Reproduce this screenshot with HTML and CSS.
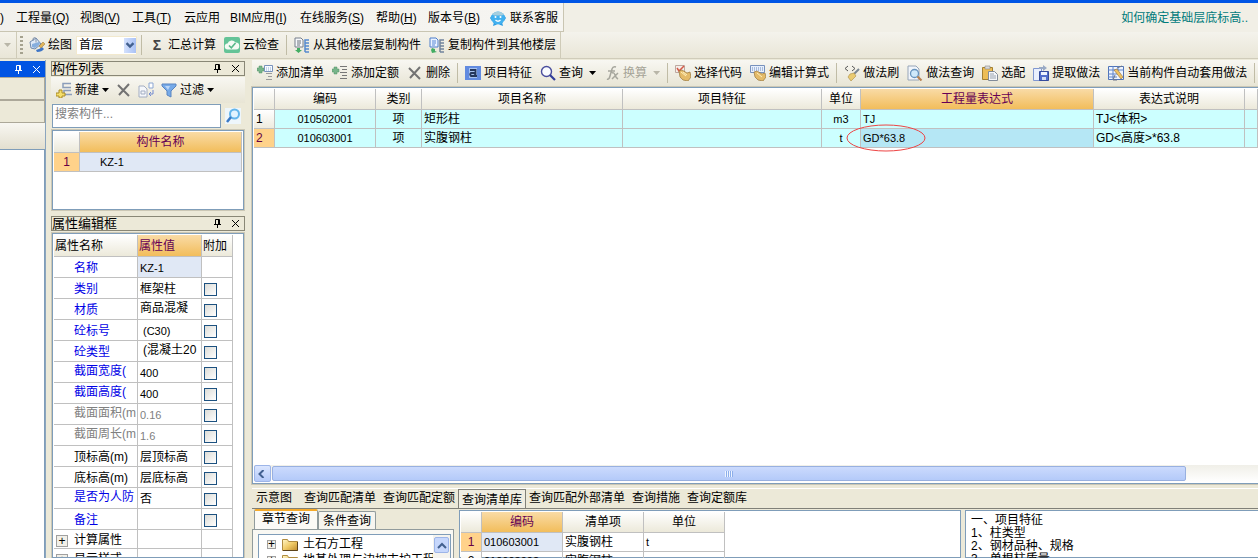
FILE: index.html
```html
<!DOCTYPE html>
<html lang="zh-CN">
<head>
<meta charset="utf-8">
<title>构件做法</title>
<link rel="stylesheet" href="styles.css">
</head>
<body>
<svg class="sprite" aria-hidden="true">
  <symbol id="i-bucket" viewBox="0 0 16 16"><path d="M1 5l6-4 5 6-6 5-4-1z" fill="#dfe9f7" stroke="#6c87ad"/><path d="M3 7l7-2 1 2-5 4-3-1z" fill="#86aede"/><path d="M4 4V1.500q2-2 3 0v4" fill="none" stroke="#8493a8"/><path d="M7 13q4-1 6-3l2 2q-2 3-7 3z" fill="#3e75c6"/><path d="M10 9l4-4 2 2-4 4z" fill="#e0b55c" stroke="#94713a" stroke-width=".5"/></symbol>
  <symbol id="i-cloud" viewBox="0 0 16 16"><rect width="16" height="16" rx="2" fill="#64c397"/><path d="M4 12.500a3 3 0 0 1-.5-6 4.500 4.500 0 0 1 8-1 3.500 3.500 0 0 1 .5 7z" fill="#f4faf4"/><path d="M5 8.500l2.300 2.300L11.500 6" fill="none" stroke="#57b889" stroke-width="1.600"/></symbol>
  <symbol id="i-from" viewBox="0 0 16 16"><path d="M1 1h6l2 2v7H1z" fill="#f7f8fa" stroke="#777f8b"/><path d="M3 4h4M3 6h4M3 8h3" stroke="#68707b"/><path d="M11 15V3h4M11 6h4M11 9h4M11 12h4M11 15h4" fill="none" stroke="#5689ce" stroke-width="1.500"/><path d="M3 11h3v2h2l-3.500 3L1 13h2z" fill="#43ad63"/></symbol>
  <symbol id="i-to" viewBox="0 0 16 16"><path d="M1 1h6l2 2v7H1z" fill="#eaf2ff" stroke="#4f7fcb"/><path d="M3 4h4M3 6h4M3 8h3" stroke="#5688d7"/><path d="M11 15V3h4M11 6h4M11 9h4M11 12h4M11 15h4" fill="none" stroke="#71849d" stroke-width="1.500"/><path d="M3 11l3 1v2l2 1-5 1-1-3z" fill="#43ad63"/></symbol>
  <symbol id="i-mascot" viewBox="0 0 16 16"><path d="M2 5L0 8l2 3M14 5l2 3-2 3M4 12l-1 4 4-1.500M12 12l1 4-4-1.500" fill="#2f9de2"/><ellipse cx="8" cy="8" rx="7" ry="6.500" fill="#43b1ef"/><path d="M2 4q6-5 12 0l-2 1.500H4z" fill="#a6cede"/><circle cx="5.500" cy="7" r="1" fill="#fff"/><circle cx="10.500" cy="7" r="1" fill="#fff"/><path d="M5.500 10q2.500 2.500 5 0" fill="none" stroke="#fff" stroke-width="1.200"/></symbol>
  <symbol id="i-pin" viewBox="0 0 9 9"><path d="M2.500 5V.5h4V5M1 5.500h7M4.500 6v3M5.500 1v4" fill="none" stroke="currentColor"/></symbol>
  <symbol id="i-close" viewBox="0 0 9 9"><path d="M1 1l7 7M8 1L1 8" stroke="currentColor"/></symbol>
  <symbol id="i-new" viewBox="0 0 16 16"><path d="M15 1.500H7v4h8M15 8.500H8v4h8" fill="none" stroke="#8b9dba" stroke-width="1.500"/><path d="M3 8h3v3h3v3H6v2H3v-2H0v-3h3z" fill="#f5df6c" stroke="#aa8c27"/></symbol>
  <symbol id="i-x" viewBox="0 0 16 16"><path d="M2 3l11 11M13 2L3 13" stroke="#737373" stroke-width="2"/></symbol>
  <symbol id="i-copy" viewBox="0 0 16 16"><path d="M1 4h5l3 3v8H1z" fill="#f5f7fb" stroke="#a2adc2"/><path d="M3 9h4v3H3z" fill="none" stroke="#a2adc2"/><path d="M11 1h4v5h-4z" fill="#fff" stroke="#8ba6d3"/><path d="M15 8v4h-3m1-2l-2 2 2 2" fill="none" stroke="#728bd1"/></symbol>
  <symbol id="i-filter" viewBox="0 0 16 16"><path d="M1 2h14v2l-5 5v6l-4-2V9L1 4z" fill="#76aae8" stroke="#5a85c0"/><path d="M4 4h5L7 8z" fill="#bcd7f7"/></symbol>
  <symbol id="i-find" viewBox="0 0 16 16"><rect width="16" height="16" fill="#eef6fb"/><circle cx="9.500" cy="6" r="4.500" fill="#e1f3ff" stroke="#62b5ec" stroke-width="2"/><path d="M6 9l-4 5" stroke="#3a79c5" stroke-width="2.500"/></symbol>
  <symbol id="i-addlist" viewBox="0 0 16 16"><path d="M2 1h3v2h2v3H5v2H2V6H0V3h2z" fill="#77b58a" stroke="#549067" stroke-width=".5"/><path d="M7.500.5h8v6h-8z" fill="#f8fbff" stroke="#7892bc"/><path d="M9 3h6M9 5h6" stroke="#8dabd7" stroke-dasharray="1 1"/><path d="M9 8.500h6M11 11.500h4M9 14.500h6" stroke="#9a9a9a"/></symbol>
  <symbol id="i-addquota" viewBox="0 0 16 16"><path d="M2 2h3v2h2v3H5v2H2V7H0V4h2z" fill="#77b58a" stroke="#549067" stroke-width=".5"/><path d="M8 1.500h7M10 4.500h5M8 7.500h7M10 10.500h5M8 13.500h7" stroke="#777"/></symbol>
  <symbol id="i-feature" viewBox="0 0 16 16"><rect y="1" width="16" height="14" fill="#628be0"/><path d="M4 3h8v10H4z" fill="#a6c2f0"/><path d="M5 5h5.500v6H12M10 8H6q-1.500 1.500 0 3h3l1-1" fill="none" stroke="#25385e" stroke-width="1.800"/></symbol>
  <symbol id="i-search" viewBox="0 0 16 16"><circle cx="6.500" cy="6.500" r="5" fill="#fafcff" stroke="#4a4e9d" stroke-width="1.400"/><path d="M10 10l5 5" stroke="#303d9a" stroke-width="2.200"/></symbol>
  <symbol id="i-fx" viewBox="0 0 16 16"><path d="M3 14q2 1 3-3l2-7q1-3 4-2M4 6h7M8 8q2-1 3 2t3 4M14 8l-6 6" fill="none" stroke="#a6a69d" stroke-width="1.500"/></symbol>
  <symbol id="i-pick" viewBox="0 0 16 16"><path d="M.5.500h9v7h-9z" fill="#f6eee9" stroke="#bda9a0"/><path d="M2 3l2 3 5-5" fill="none" stroke="#d45a48" stroke-width="1.500"/><path d="M4 6l3-1 5 3 3-1 1 5-3 4-5-1-3-3z" fill="#e4bb69" stroke="#98763a" stroke-width=".7"/><path d="M6 7l5 4M8 7l4 3" stroke="#fff0bb"/></symbol>
  <symbol id="i-expr" viewBox="0 0 16 16"><path d="M.5.500h14v7H.5z" fill="#e7effc" stroke="#7791bd"/><path d="M2 3h11M2 5h11" stroke="#6888be" stroke-dasharray="1 1"/><path d="M4 7l3-1 5 3 3-1 1 4-3 4-5-1-3-3z" fill="#e4bb69" stroke="#98763a" stroke-width=".7"/><path d="M7 8l5 4" stroke="#fff0bb"/></symbol>
  <symbol id="i-brush" viewBox="0 0 16 16"><path d="M4 1L1 3.500 4 6M8 1l3 2.500L8 6" fill="none" stroke="#555"/><path d="M15 4l-5 5" stroke="#7c8792" stroke-width="2"/><path d="M6 9l4-1 2 3-5 5-3-4z" fill="#eacb71" stroke="#ad8d43" stroke-width=".6"/></symbol>
  <symbol id="i-docfind" viewBox="0 0 16 16"><path d="M1 1h8l3 3v11H1z" fill="#f1f5fb" stroke="#97a5b8"/><circle cx="7.500" cy="8.500" r="4" fill="#cfe9fa" stroke="#6793bd" stroke-width="1.300"/><path d="M10.500 11.500l4 4" stroke="#b88352" stroke-width="2.200"/></symbol>
  <symbol id="i-paste" viewBox="0 0 16 16"><path d="M.5 2.500h10v12H.5z" fill="#edbd55" stroke="#a48031"/><path d="M3 1h5v3H3z" fill="#d9d9d9" stroke="#888" stroke-width=".6"/><path d="M6.500 6.500h6l3 3v6h-9z" fill="#f5f7fa" stroke="#818b99"/><path d="M8 9h4M8 11h6M8 13h6" stroke="#99a3af"/></symbol>
  <symbol id="i-extract" viewBox="0 0 16 16"><path d="M.5 3.500h8v12h-8z" fill="#e9effd" stroke="#8097d1"/><path d="M6 2h4V0l4 3-4 3V4H6z" fill="#9aaac5"/><path d="M6.500 6.500h9v9h-9z" fill="#526ecb" stroke="#354b9c"/><path d="M8 7h6v3H8z" fill="#eef3ff"/><path d="M9 12h4v3H9z" fill="#d4def5"/></symbol>
  <symbol id="i-auto" viewBox="0 0 16 16"><path d="M.5 1.500h15v13H.5z" fill="#eef4ff" stroke="#4f73b7"/><path d="M0 5h16M0 9h9M0 12h9M5 1v14M10 1v5" stroke="#5e83c9"/><path d="M6 5l3-1 6 8-2 2z" fill="#efc261" stroke="#99794e" stroke-width=".7"/><path d="M7 10l-2 5h4M9 3l5-2" stroke="#6e7788" fill="none"/></symbol>
  <symbol id="i-folder" viewBox="0 0 16 13"><linearGradient id="fold" x2="1" y2="1"><stop stop-color="#fff6c8"/><stop offset=".5" stop-color="#f0cb68"/><stop offset="1" stop-color="#c08b2c"/></linearGradient><path d="M.5 1.500h5l1 2h9v9H.5z" fill="url(#fold)" stroke="#b08c40"/><path d="M1 12.500h14.500V4" fill="none" stroke="#5c431c"/></symbol>
  <symbol id="i-down" viewBox="0 0 8 6"><path d="M1 1l3 3 3-3" fill="none" stroke="#42608f" stroke-width="2"/></symbol>
</svg>

<header class="top">
  <nav class="menu">
    <button>)</button>
    <button>工程量(<u>Q</u>)</button>
    <button>视图(<u>V</u>)</button>
    <button>工具(<u>T</u>)</button>
    <button>云应用</button>
    <button>BIM应用(<u>I</u>)</button>
    <button>在线服务(<u>S</u>)</button>
    <button>帮助(<u>H</u>)</button>
    <button>版本号(<u>B</u>)</button>
    <button class="service"><svg class="icon"><use href="#i-mascot"/></svg>联系客服</button>
  </nav>
  <a class="help" href="#">如何确定基础层底标高..</a>
</header>

<div class="toolbar main-tools">
  <span class="overflow"><i class="arrow dim"></i></span>
  <span class="grip"></span>
  <button class="tool"><svg class="icon"><use href="#i-bucket"/></svg>绘图</button>
  <span class="combo"><select aria-label="楼层"><option>首层</option></select><svg class="combo-arrow"><use href="#i-down"/></svg></span>
  <span class="sep"></span>
  <button class="tool"><b class="icon sigma">Σ</b>汇总计算</button>
  <button class="tool"><svg class="icon"><use href="#i-cloud"/></svg>云检查</button>
  <span class="sep"></span>
  <button class="tool"><svg class="icon"><use href="#i-from"/></svg>从其他楼层复制构件</button>
  <button class="tool"><svg class="icon"><use href="#i-to"/></svg>复制构件到其他楼层</button>
  <span class="tool-end"></span>
</div>

<main class="workspace">
  <aside class="dock">
    <div class="dock-title"><svg class="mini"><use href="#i-pin"/></svg><svg class="mini"><use href="#i-close"/></svg></div>
    <div class="dock-bar"></div>
    <div class="dock-bar"></div>
    <div class="dock-tools"></div>
    <div class="dock-body"></div>
  </aside>

  <aside class="side">
    <section class="components">
      <h2 class="title"><span>构件列表</span><svg class="mini"><use href="#i-pin"/></svg><svg class="mini"><use href="#i-close"/></svg></h2>
      <div class="toolbar list-tools">
        <button class="tool"><svg class="icon"><use href="#i-new"/></svg>新建<i class="arrow"></i></button>
        <button class="tool bare" aria-label="删除"><svg class="icon"><use href="#i-x"/></svg></button>
        <button class="tool bare" aria-label="复制"><svg class="icon"><use href="#i-copy"/></svg></button>
        <button class="tool"><svg class="icon"><use href="#i-filter"/></svg>过滤<i class="arrow"></i></button>
      </div>
      <div class="search">
        <input type="text" placeholder="搜索构件..." aria-label="搜索构件">
        <button aria-label="搜索"><svg class="icon"><use href="#i-find"/></svg></button>
      </div>
      <div class="frame list-frame">
        <table class="grid">
          <colgroup><col class="c26"><col></colgroup>
          <tr><th></th><th class="active">构件名称</th></tr>
          <tr><td class="row-no on">1</td><td class="picked indent latin">KZ-1</td></tr>
        </table>
      </div>
    </section>

    <section class="properties">
      <h2 class="title"><span>属性编辑框</span><svg class="mini"><use href="#i-pin"/></svg><svg class="mini"><use href="#i-close"/></svg></h2>
      <div class="frame prop-frame">
        <table class="grid props">
          <colgroup><col class="c84"><col class="c64"><col class="c31"></colgroup>
          <tr><th>属性名称</th><th class="active">属性值</th><th>附加</th></tr>
          <tr><td class="name">名称</td><td class="picked latin">KZ-1</td><td></td></tr>
          <tr><td class="name">类别</td><td>框架柱</td><td><input type="checkbox" aria-label="类别"></td></tr>
          <tr><td class="name">材质</td><td class="raised">商品混凝</td><td><input type="checkbox" aria-label="材质"></td></tr>
          <tr><td class="name">砼标号</td><td class="latin inset">(C30)</td><td><input type="checkbox" aria-label="砼标号"></td></tr>
          <tr><td class="name">砼类型</td><td class="raised inset">(混凝土20</td><td><input type="checkbox" aria-label="砼类型"></td></tr>
          <tr><td class="name raised">截面宽度(</td><td class="latin">400</td><td><input type="checkbox" aria-label="截面宽度"></td></tr>
          <tr><td class="name raised">截面高度(</td><td class="latin">400</td><td><input type="checkbox" aria-label="截面高度"></td></tr>
          <tr class="muted"><td class="name raised">截面面积(m</td><td class="latin">0.16</td><td><input type="checkbox" aria-label="截面面积"></td></tr>
          <tr class="muted"><td class="name raised">截面周长(m</td><td class="latin">1.6</td><td><input type="checkbox" aria-label="截面周长"></td></tr>
          <tr class="plain"><td class="name">顶标高(m)</td><td>层顶标高</td><td><input type="checkbox" aria-label="顶标高"></td></tr>
          <tr class="plain"><td class="name">底标高(m)</td><td>层底标高</td><td><input type="checkbox" aria-label="底标高"></td></tr>
          <tr><td class="name raised">是否为人防</td><td>否</td><td><input type="checkbox" aria-label="是否为人防"></td></tr>
          <tr><td class="name">备注</td><td></td><td><input type="checkbox" aria-label="备注"></td></tr>
          <tr class="group"><td><button class="expand" aria-label="展开">+</button>计算属性</td><td></td><td></td></tr>
          <tr class="group"><td><button class="expand" aria-label="展开">+</button>显示样式</td><td></td><td></td></tr>
        </table>
      </div>
    </section>
  </aside>

  <section class="content">
    <div class="toolbar work-tools">
      <button class="tool"><svg class="icon"><use href="#i-addlist"/></svg>添加清单</button>
      <button class="tool"><svg class="icon"><use href="#i-addquota"/></svg>添加定额</button>
      <button class="tool"><svg class="icon"><use href="#i-x"/></svg>删除</button>
      <span class="sep"></span>
      <button class="tool"><svg class="icon"><use href="#i-feature"/></svg>项目特征</button>
      <button class="tool"><svg class="icon"><use href="#i-search"/></svg>查询<i class="arrow far"></i></button>
      <button class="tool" disabled><svg class="icon"><use href="#i-fx"/></svg>换算<i class="arrow far dim"></i></button>
      <span class="sep"></span>
      <button class="tool"><svg class="icon"><use href="#i-pick"/></svg>选择代码</button>
      <button class="tool"><svg class="icon"><use href="#i-expr"/></svg>编辑计算式</button>
      <span class="sep"></span>
      <button class="tool"><svg class="icon"><use href="#i-brush"/></svg>做法刷</button>
      <button class="tool"><svg class="icon"><use href="#i-docfind"/></svg>做法查询</button>
      <button class="tool"><svg class="icon"><use href="#i-paste"/></svg>选配</button>
      <button class="tool"><svg class="icon"><use href="#i-extract"/></svg>提取做法</button>
      <button class="tool"><svg class="icon"><use href="#i-auto"/></svg>当前构件自动套用做法</button>
      <span class="sep"></span>
    </div>

    <div class="frame work-frame">
      <table class="grid work">
        <colgroup><col class="c21"><col class="c101"><col class="c46"><col class="c201"><col class="c199"><col class="c39"><col class="c233"><col class="c151"><col></colgroup>
        <tr><th></th><th>编码</th><th>类别</th><th>项目名称</th><th>项目特征</th><th>单位</th><th class="active">工程量表达式</th><th>表达式说明</th><th></th></tr>
        <tr><td class="row-no">1</td><td class="center latin">010502001</td><td class="center">项</td><td>矩形柱</td><td></td><td class="center latin">m3</td><td class="latin">TJ</td><td>TJ&lt;体积&gt;</td><td></td></tr>
        <tr><td class="row-no on">2</td><td class="center latin">010603001</td><td class="center">项</td><td>实腹钢柱</td><td></td><td class="center latin">t</td><td class="latin current">GD*63.8<svg class="mark" viewBox="0 0 80 28"><ellipse cx="40" cy="14" rx="39" ry="13" fill="none" stroke="#ee4444"/></svg></td><td>GD&lt;高度&gt;*63.8</td><td></td></tr>
      </table>
      <div class="hscroll">
        <button aria-label="向左滚动"><svg viewBox="0 0 8 8"><path d="M5.500 0l-4 4 4 4" fill="none" stroke="#42608f" stroke-width="2"/></svg></button>
        <div class="thumb"><i></i></div>
      </div>
    </div>

    <nav class="tabs">
      <button class="first">示意图</button><button>查询匹配清单</button><button>查询匹配定额</button><button class="selected">查询清单库</button><button>查询匹配外部清单</button><button>查询措施</button><button>查询定额库</button>
    </nav>

    <div class="lower">
      <section class="chapters">
        <div class="subtabs"><button class="selected">章节查询</button><button>条件查询</button></div>
        <div class="tree-page">
          <div class="tree">
            <ul>
              <li><button class="expand" aria-label="展开">+</button><svg class="folder"><use href="#i-folder"/></svg>土石方工程</li>
              <li><button class="expand" aria-label="展开">+</button><svg class="folder"><use href="#i-folder"/></svg>地基处理与边坡支护工程</li>
            </ul>
            <div class="vscroll"><button aria-label="向上滚动"><svg viewBox="0 0 10 7"><path d="M1 6l4-4 4 4" fill="none" stroke="#42608f" stroke-width="2"/></svg></button></div>
          </div>
        </div>
      </section>
      <section class="results">
        <table class="grid">
          <colgroup><col class="c21"><col class="c81"><col class="c81"><col class="c81"></colgroup>
          <tr><th></th><th class="active">编码</th><th>清单项</th><th>单位</th></tr>
          <tr><td class="row-no on">1</td><td class="picked latin">010603001</td><td>实腹钢柱</td><td class="latin">t</td></tr>
          <tr><td class="row-no">2</td><td class="latin">010603002</td><td>实腹钢柱</td><td class="latin"></td></tr>
        </table>
      </section>
      <section class="notes">
        <p>一、项目特征</p><p>1、柱类型</p><p>2、钢材品种、规格</p><p>3、单根柱质量</p>
      </section>
    </div>
  </section>
</main>
</body>
</html>
```

FILE: styles.css
```css
* { box-sizing: border-box; }
body {
  margin: 0;
  height: 100vh;
  overflow: hidden;
  display: flex;
  flex-direction: column;
  border-top: 3px solid #0055e5;
  background: #ece9d8;
  color: #000;
  font: 12px/16px "Liberation Sans", "Noto Sans CJK SC", sans-serif;
}
button, input, select { font: inherit; color: inherit; margin: 0; border-radius: 0; }
button { border: 0; padding: 0; background: none; white-space: nowrap; }
.sprite { position: absolute; width: 0; height: 0; }
.icon { width: 16px; height: 16px; flex: none; }
.mini { width: 9px; height: 9px; flex: none; }

/* menu */
.top { flex: none; height: 29px; display: flex; justify-content: space-between; align-items: stretch; background: #f1efe6; }
.menu {
  display: grid;
  grid-template-columns: 16px 64px 52px 52px 46px 70px 76px 52px 62px 73px;
  padding-top: 2px;
  background: linear-gradient(90deg, #f1f0ec, #f6f5f1);
  border-right: 1px solid #c9c5b2;
  border-bottom: 1px solid #c9c5b2;
}
.menu button { text-align: left; }
.menu u { text-underline-offset: 1px; }
.menu .service { display: flex; align-items: center; gap: 4px; }
.help { align-self: center; padding-right: 10px; color: #007b7b; text-decoration: none; }

/* toolbars */
.toolbar { flex: none; display: flex; align-items: center; height: 26px; background: linear-gradient(#f8f7f2, #e8e5d5); overflow: hidden; }
.tool { display: flex; align-items: center; gap: 3px; padding: 0 4px; height: 22px; flex: none; }
.tool:disabled { color: #a6a497; }
.sep { flex: none; width: 1px; height: 20px; margin: 0 3px; background: #c0bca6; }
.arrow { flex: none; width: 7px; height: 4px; background: #000; clip-path: polygon(0 0, 100% 0, 50% 100%); }
.arrow.far { margin-left: 3px; }
.arrow.dim { background: #b9b6a8; }
.main-tools { height: 27px; border-bottom: 1px solid #d0ccba; background: linear-gradient(#f4f3ec, #e9e6d7); }
.overflow { width: 17px; padding-left: 4px; height: 26px; display: flex; align-items: center; border-right: 1px solid #cfcbb8; }
.grip { width: 3px; height: 18px; margin: 0 2px 0 3px; background: repeating-linear-gradient(#a5a28f 0 2px, transparent 2px 4px); }
.sigma { font: 700 14px/16px "Liberation Sans", sans-serif; text-align: center; color: #444; }
.combo { position: relative; width: 61px; height: 19px; margin-right: 1px; }
.combo select { appearance: none; width: 100%; height: 19px; padding: 0 2px; border: 1px solid #f2e9ce; background: #fff; line-height: 16px; }
.combo-arrow { position: absolute; right: 1px; top: 2px; width: 12px; height: 15px; padding: 4px 1px; background: linear-gradient(90deg, #d4e1fd, #a9c1f5); pointer-events: none; }
.tool-end { width: 1px; height: 26px; background: #cfcbb8; }

/* docks */
.workspace { flex: 1; min-height: 0; display: flex; padding-top: 1px; }
.dock { width: 46px; flex: none; padding-top: 1px; display: flex; flex-direction: column; border-right: 1px solid #8ba5be; }
.dock-title { height: 16px; padding: 0 4px; gap: 9px; display: flex; align-items: center; justify-content: flex-end; background: #0054e3; color: #fff; }
.dock-bar { height: 23px; border: 1px solid #aca899; border-left: 0; }
.dock-tools { height: 26px; background: linear-gradient(#f8f7f2, #e3dfcf); }
.dock-body { flex: 1; background: #fff; border-top: 1px solid #7f9db9; border-right: 1px solid #7f9db9; }
.side { width: 194px; flex: none; margin-left: 5px; padding-top: 1px; display: flex; flex-direction: column; gap: 6px; }
.side section { display: flex; flex-direction: column; }
.components { flex: none; }
.properties { flex: 1; min-height: 0; }
.title { flex: none; display: flex; align-items: center; gap: 9px; height: 15px; margin: 0 0 1px; padding-right: 4px; border: 1px solid #898776; font-size: 13px; line-height: 13px; font-weight: 400; }
.title span { flex: 1; }
.list-tools { padding-left: 1px; }
.bare { padding: 0 3px; }
.search { display: flex; height: 26px; padding: 1px 0 1px 1px; }
.search input { flex: 1; min-width: 0; padding: 0 2px 4px; border: 1px solid #7f9db9; background: #fff; }
.search input::placeholder { color: #808080; opacity: 1; }
.search button { width: 24px; display: grid; place-items: center; }
.frame { border: 1px solid #7f9db9; outline: 1px solid #cbc7b5; background: #fff; padding: 1px; }
.list-frame { height: 80px; margin: 1px 1px 0; }
.prop-frame { flex: 1; min-height: 0; margin: 1px 1px 0; overflow: hidden; }

/* data grids */
.grid { width: 100%; table-layout: fixed; border-collapse: separate; border-spacing: 0; }
.grid th, .grid td { height: 19px; padding: 0 2px; border: solid #c0c0c0; border-width: 0 1px 1px 0; line-height: 16px; text-align: left; white-space: nowrap; }
.grid th { height: 21px; text-align: center; font-weight: 400; background: linear-gradient(#fff, #ece9da); }
.grid th.active { color: #660055; background: linear-gradient(#f9dba6, #f2bd5b); }
.grid .picked { background: #e0e8f5; }
.grid .row-no { background: linear-gradient(#fff, #eeebdf); }
.grid .row-no.on { background: #ffd28a; color: #660044; }
.grid .center { text-align: center; }
.latin { font-size: 11px; }
.grid .indent { padding-left: 20px; }
.list-frame .row-no, .results .row-no { text-align: center; }
.c21 { width: 21px; } .c26 { width: 26px; } .c31 { width: 31px; } .c39 { width: 39px; }
.c46 { width: 46px; } .c64 { width: 64px; } .c81 { width: 81px; } .c84 { width: 84px; }
.c101 { width: 101px; } .c151 { width: 151px; } .c199 { width: 199px; } .c201 { width: 201px; } .c233 { width: 233px; }
.props { width: 179px; }
.grid.props td { height: 21px; padding-top: 2px; overflow: hidden; }
.grid.props th { height: 22px; text-align: left; padding: 1px 1px 0; }
.grid.props .name { padding-left: 20px; padding-right: 0; color: #0000e6; }
.grid.props .raised { padding-top: 0; padding-bottom: 3px; }
.grid.props .inset { padding-left: 5px; }
.grid.props .plain .name { color: #000; }
.grid.props .muted td { color: #808080; }
.props input { appearance: none; display: block; width: 13px; height: 13px; border: 1px solid #1c5180; background: linear-gradient(135deg, #dcdcd7, #fff); }
.grid.props .group td { height: 19px; }
.expand { display: inline-grid; place-items: center; width: 12px; height: 12px; border: 1px solid #a0a0a0; background: #f2f0e8; line-height: 10px; vertical-align: middle; }
.group .expand { margin-right: 6px; }

/* work area */
.content { flex: 1; min-width: 0; margin-left: 7px; display: flex; flex-direction: column; }
.work-tools { padding-left: 1px; }
.work-frame { flex: 1; min-height: 0; display: flex; flex-direction: column; margin-top: 1px; border-right: 0; padding-right: 0; }
.work td { background: #ccffff; }
.grid.work .current { position: relative; background: #b5e7f5; }
.mark { position: absolute; left: -15px; top: -5px; width: 80px; height: 28px; }
.hscroll { height: 17px; margin-top: auto; display: flex; background: linear-gradient(#f0efe8, #fff); }
.hscroll button { width: 17px; padding: 3px; border: 1px solid #9db5e8; border-radius: 2px; background: linear-gradient(#dbe6ff, #b5caf8); }
.hscroll svg { display: block; width: 8px; height: 8px; }
.thumb { width: 91%; display: grid; place-items: center; margin: 1px; border: 1px solid #98b0e0; border-radius: 2px; background: linear-gradient(#cbdafd, #b4caf9); }
.thumb i { width: 8px; height: 6px; background: repeating-linear-gradient(90deg, #eef4ff 0 1px, #8caeea 1px 2px); }

/* query tabs */
.tabs { flex: none; display: flex; height: 21px; margin-top: 4px; border-top: 1px solid #fff; border-bottom: 1px solid #808078; }
.tabs button { padding: 0 3px 2px 4px; }
.tabs .first { padding-right: 8px; }
.tabs .selected { padding: 2px 3px 0; margin-right: -1px; border: 1px solid #808078; border-bottom: 0; background: #efede2; }

/* query results */
.lower { flex: none; height: 49px; display: flex; overflow: hidden; }
.chapters { width: 202px; flex: none; display: flex; flex-direction: column; }
.subtabs { flex: none; height: 20px; display: flex; align-items: flex-end; padding-left: 2px; }
.subtabs button { height: 18px; padding: 0 4px; border: 1px solid #919b9c; border-bottom: 0; border-radius: 2px 2px 0 0; background: #f6f5ef; }
.subtabs .selected { height: 20px; padding: 0 7px 2px; border-top: 2px solid #f5aa2a; background: #fbfaf6; }
.tree-page { flex: 1; padding: 4px 2px 0 5px; background: #f9f8f3; border: 1px solid #919b9c; border-bottom: 0; }
.tree { display: flex; background: #fff; border: 1px solid #7f9db9; }
.tree ul { flex: 1; min-width: 0; margin: 0; padding: 1px 0 0 8px; list-style: none; overflow: hidden; }
.tree li { display: flex; align-items: center; height: 16px; white-space: nowrap; }
.tree .expand { width: 9px; height: 9px; line-height: 7px; flex: none; }
.folder { width: 16px; height: 13px; margin: 0 5px 0 6px; flex: none; }
.vscroll { width: 17px; padding: 1px; background: #f4f3ee; }
.vscroll button { width: 15px; height: 16px; padding: 4px 2px; border: 1px solid #9db5e8; border-radius: 2px; background: #c6d7fc; }
.vscroll svg { display: block; width: 10px; height: 7px; }
.results { flex: 1; min-width: 0; margin: 1px 4px 0 5px; padding: 1px 0 0 1px; border: 1px solid #7f9db9; background: #fff; }
.results .grid { width: 264px; }
.notes { width: 293px; flex: none; margin-top: 1px; padding: 3px 5px; border: 1px solid #7f9db9; border-right: 0; background: #fff; }
.notes p { margin: 0; line-height: 13px; }
```
